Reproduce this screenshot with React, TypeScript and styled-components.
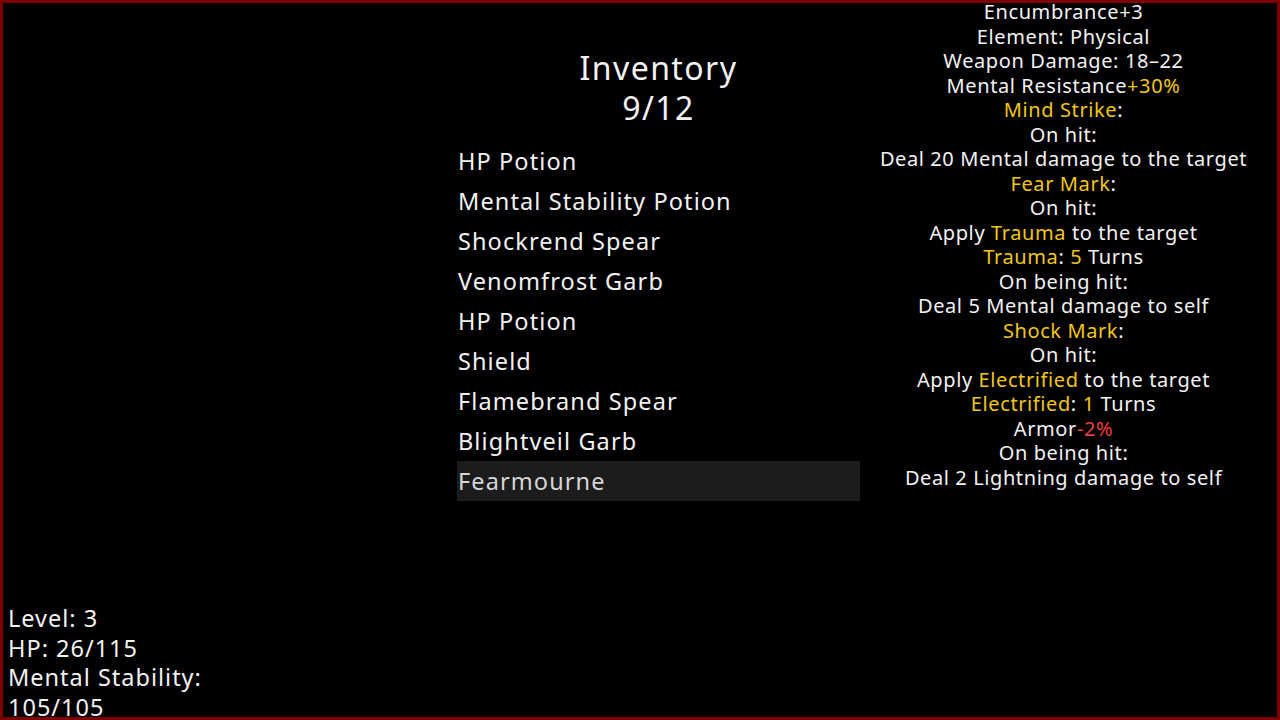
import React from 'react';
import styled, { createGlobalStyle } from 'styled-components';

const GlobalStyle = createGlobalStyle`
  html, body {
    margin: 0;
    padding: 0;
    background: #000;
  }
  body {
    font-family: "Noto Sans", "Open Sans", sans-serif;
    color: #f2f2f2;
  }
`;

type Tone = 'plain' | 'key' | 'bad';

interface Span {
  text: string;
  tone?: Tone;
}

const items = [
  'HP Potion',
  'Mental Stability Potion',
  'Shockrend Spear',
  'Venomfrost Garb',
  'HP Potion',
  'Shield',
  'Flamebrand Spear',
  'Blightveil Garb',
  'Fearmourne',
];

const selectedIndex = 8;

const details: Span[][] = [
  [{ text: 'Encumbrance+3' }],
  [{ text: 'Element: Physical' }],
  [{ text: 'Weapon Damage: 18–22' }],
  [{ text: 'Mental Resistance' }, { text: '+30%', tone: 'key' }],
  [{ text: 'Mind Strike', tone: 'key' }, { text: ':' }],
  [{ text: 'On hit:' }],
  [{ text: 'Deal 20 Mental damage to the target' }],
  [{ text: 'Fear Mark', tone: 'key' }, { text: ':' }],
  [{ text: 'On hit:' }],
  [{ text: 'Apply ' }, { text: 'Trauma', tone: 'key' }, { text: ' to the target' }],
  [{ text: 'Trauma', tone: 'key' }, { text: ': ' }, { text: '5', tone: 'key' }, { text: ' Turns' }],
  [{ text: 'On being hit:' }],
  [{ text: 'Deal 5 Mental damage to self' }],
  [{ text: 'Shock Mark', tone: 'key' }, { text: ':' }],
  [{ text: 'On hit:' }],
  [{ text: 'Apply ' }, { text: 'Electrified', tone: 'key' }, { text: ' to the target' }],
  [{ text: 'Electrified', tone: 'key' }, { text: ': ' }, { text: '1', tone: 'key' }, { text: ' Turns' }],
  [{ text: 'Armor' }, { text: '-2%', tone: 'bad' }],
  [{ text: 'On being hit:' }],
  [{ text: 'Deal 2 Lightning damage to self' }],
];

const stats = ['Level: 3', 'HP: 26/115', 'Mental Stability:', '105/105'];

const Frame = styled.div`
  width: 1280px;
  height: 720px;
  box-sizing: border-box;
  border: 3px solid #7c0101;
  background: #000;
  display: grid;
  grid-template-columns: 454px 403px 1fr;
  overflow: hidden;
`;

const StatsColumn = styled.div`
  display: flex;
  flex-direction: column;
  justify-content: flex-end;
  padding-left: 5px;
  margin-bottom: -5px;
`;

const StatLine = styled.div`
  font-size: 23.5px;
  line-height: 29.5px;
  letter-spacing: 1px;
  white-space: nowrap;
`;

const InventoryColumn = styled.div`
  display: flex;
  flex-direction: column;
  padding-top: 45px;
`;

const Title = styled.h1`
  margin: 0 0 13px;
  font-size: 32px;
  font-weight: 400;
  line-height: 40px;
  letter-spacing: 1.4px;
  text-align: center;
`;

const ItemList = styled.ul`
  list-style: none;
  margin: 0;
  padding: 0;
`;

const Item = styled.li<{ $selected: boolean }>`
  height: 40px;
  display: flex;
  align-items: center;
  padding-left: 1px;
  font-size: 23.5px;
  letter-spacing: 1.1px;
  white-space: nowrap;
  background: ${(p) => (p.$selected ? '#1c1c1c' : 'transparent')};
  color: ${(p) => (p.$selected ? '#d6d6d6' : '#f2f2f2')};
`;

const DetailColumn = styled.div`
  display: flex;
  flex-direction: column;
  align-items: center;
  margin-top: -3px;
  padding-right: 10px;
`;

const DetailLine = styled.div`
  font-size: 20px;
  line-height: 24.5px;
  letter-spacing: 0.6px;
  white-space: nowrap;
  text-align: center;
`;

const toneColor: Record<Tone, string> = {
  plain: '#f2f2f2',
  key: '#f2c619',
  bad: '#ee3d3d',
};

const Part = styled.span<{ $tone: Tone }>`
  color: ${(p) => toneColor[p.$tone]};
`;

export default function App() {
  return (
    <>
      <GlobalStyle />
      <Frame>
        <StatsColumn>
          {stats.map((s) => (
            <StatLine key={s}>{s}</StatLine>
          ))}
        </StatsColumn>
        <InventoryColumn>
          <Title>
            Inventory
            <br />
            9/12
          </Title>
          <ItemList>
            {items.map((name, i) => (
              <Item key={i} $selected={i === selectedIndex}>
                {name}
              </Item>
            ))}
          </ItemList>
        </InventoryColumn>
        <DetailColumn>
          {details.map((line, i) => (
            <DetailLine key={i}>
              {line.map((part, j) => (
                <Part key={j} $tone={part.tone ?? 'plain'}>
                  {part.text}
                </Part>
              ))}
            </DetailLine>
          ))}
        </DetailColumn>
      </Frame>
    </>
  );
}
